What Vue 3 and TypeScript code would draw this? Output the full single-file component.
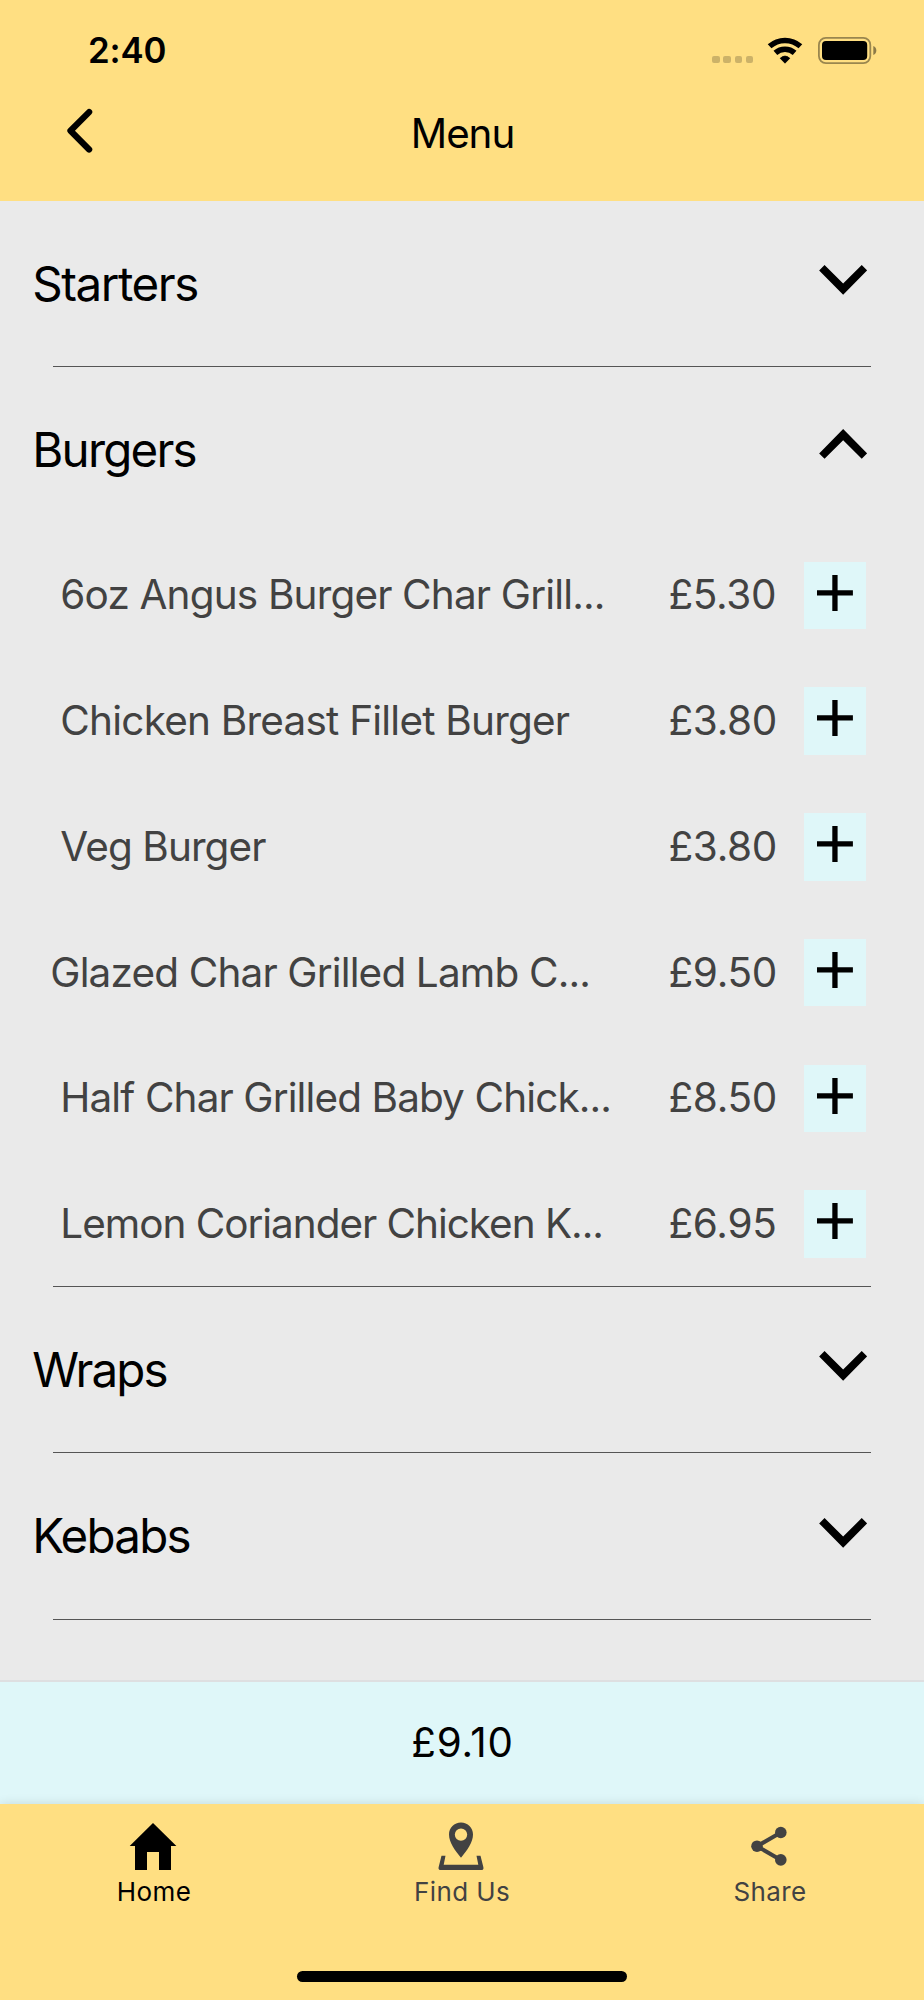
<script setup lang="ts">
import { computed, ref } from 'vue'

interface Item {
  name: string
  price: number
  tracking: number
  outdent?: boolean
}

interface Section {
  title: string
  tracking: number
  open: boolean
  items: Item[]
}

const sections = ref<Section[]>([
  { title: 'Starters', tracking: -1.46, open: false, items: [] },
  {
    title: 'Burgers',
    tracking: -1.78,
    open: true,
    items: [
      { name: '6oz Angus Burger Char Grill...', price: 5.3, tracking: -0.84 },
      { name: 'Chicken Breast Fillet Burger', price: 3.8, tracking: -0.78 },
      { name: 'Veg Burger', price: 3.8, tracking: -0.92 },
      { name: 'Glazed Char Grilled Lamb C...', price: 9.5, tracking: -0.85, outdent: true },
      { name: 'Half Char Grilled Baby Chick...', price: 8.5, tracking: -0.89 },
      { name: 'Lemon Coriander Chicken K...', price: 6.95, tracking: -1.04 },
    ],
  },
  { title: 'Wraps', tracking: -1.9, open: false, items: [] },
  { title: 'Kebabs', tracking: -1.75, open: false, items: [] },
])

const total = ref(9.1)
const activeTab = ref('Home')
const tabs = ['Home', 'Find Us', 'Share']

const money = (value: number): string => `£${value.toFixed(2)}`
const totalLabel = computed(() => money(total.value))

function toggle(section: Section): void {
  section.open = !section.open
}

function add(item: Item): void {
  total.value += item.price
}
</script>

<template>
  <div class="screen">
    <header class="app-bar">
      <div class="status">
        <span class="time">2:40</span>
        <div class="indicators">
          <span class="cell"><i v-for="n in 4" :key="n"></i></span>
          <svg class="wifi" viewBox="0 0 36 27" aria-hidden="true">
            <g fill="none" stroke="#000" stroke-width="5.5">
              <path d="M2.6 9.3a23 23 0 0 1 30.8 0" />
              <path d="M8.4 15.9a14.2 14.2 0 0 1 19.2 0" />
            </g>
            <path
              d="M18 26.2 L13.2 21.3 Q18 16.9 22.8 21.3 Z"
              stroke="#000"
              stroke-width=".8"
              stroke-linejoin="round"
            />
          </svg>
          <svg class="battery" viewBox="0 0 59 27" aria-hidden="true">
            <rect x=".9" y=".9" width="51.4" height="25.2" rx="7" fill="none" stroke="#000" stroke-opacity=".4" stroke-width="1.8" />
            <rect x="4" y="4" width="45.2" height="19" rx="4" />
            <path d="M55.3 9v9q3-1.3 3-4.5t-3-4.5z" fill-opacity=".45" />
          </svg>
        </div>
      </div>
      <div class="toolbar">
        <button class="back" type="button" aria-label="Back">
          <svg viewBox="0 0 26 46">
            <path d="M22.1 4.1 3.5 22.8 22.1 41.4" fill="none" stroke="#000" stroke-width="6.3" stroke-linecap="round" stroke-linejoin="round" />
          </svg>
        </button>
        <h1>Menu</h1>
      </div>
    </header>

    <main class="menu">
      <section v-for="section in sections" :key="section.title" class="section">
        <button class="section-head" :class="{ open: section.open }" type="button" @click="toggle(section)">
          <span class="section-title" :style="{ letterSpacing: section.tracking + 'px' }">{{ section.title }}</span>
          <svg class="chevron" viewBox="0 0 48 30" aria-hidden="true">
            <path v-if="section.open" d="M24 0 48 24.4 42.6 29.8 24 11.2 5.4 29.8 0 24.4z" />
            <path v-else d="M24 29.8 48 5.4 42.6 0 24 18.6 5.4 0 0 5.4z" />
          </svg>
        </button>
        <ul v-if="section.open" class="items">
          <li v-for="item in section.items" :key="item.name" class="item">
            <span class="name" :class="{ outdent: item.outdent }" :style="{ letterSpacing: item.tracking + 'px' }">{{ item.name }}</span>
            <span class="price">{{ money(item.price) }}</span>
            <button class="add" type="button" aria-label="Add" @click="add(item)">
              <svg viewBox="0 0 36 36">
                <path d="M15.3 0h5.3v15.3h15.3v5.3h-15.3v15.3h-5.3v-15.3h-15.3v-5.3h15.3z" />
              </svg>
            </button>
          </li>
        </ul>
        <hr class="rule" />
      </section>
    </main>

    <div class="basket">{{ totalLabel }}</div>

    <nav class="tab-bar">
      <div class="tabs">
        <button v-for="tab in tabs" :key="tab" class="tab" :class="{ active: tab === activeTab }" type="button" @click="activeTab = tab">
          <svg class="tab-icon" viewBox="0 0 48 48" fill="currentColor" aria-hidden="true">
            <path v-if="tab === 'Home'" d="M24 1 47.4 24H42v24H30V30H18v18H6V24H.7z" />
            <g v-else-if="tab === 'Find Us'">
              <path
                fill-rule="evenodd"
                d="M24 .6c6.7 0 12 5.3 12 12 0 8-6.2 16.5-12 23.2-5.8-6.7-12-15.2-12-23.2 0-6.7 5.3-12 12-12zm0 5.8a6.2 6.2 0 1 0 0 12.4 6.2 6.2 0 1 0 0-12.4z"
              />
              <path d="M4.5 33.7h4L6.7 42.8h34.6l-1.8-9.1h4l2.9 11.5q.6 2.8-2.2 2.8H3.8Q1 48 1.600 45.200z" />
            </g>
            <g v-else>
              <path d="M35.8 10.5 12 24.2l23.8 13.7" fill="none" stroke="currentColor" stroke-width="4" />
              <circle cx="35.8" cy="10.5" r="5.8" />
              <circle cx="12" cy="24.2" r="5.8" />
              <circle cx="35.8" cy="37.9" r="5.8" />
            </g>
          </svg>
          <span class="tab-label">{{ tab }}</span>
        </button>
      </div>
      <div class="home-indicator"></div>
    </nav>
  </div>
</template>

<style>
body {
  margin: 0;
}
</style>

<style scoped>
.screen {
  display: flex;
  flex-direction: column;
  width: 924px;
  height: 2000px;
  overflow: hidden;
  background: #eaeaea;
  color: #000;
  font-family: Inter, "Liberation Sans", sans-serif;
}

button {
  padding: 0;
  border: 0;
  background: none;
  color: inherit;
  font: inherit;
}

svg {
  display: block;
}

.app-bar {
  flex: none;
  height: 201px;
  background: #ffdf82;
}

.status {
  display: flex;
  align-items: center;
  justify-content: space-between;
  height: 100px;
  padding: 0 47px 0 88px;
}

.time {
  font-size: 34.8px;
  font-weight: 600;
  letter-spacing: -0.15px;
}

.indicators {
  display: flex;
  align-items: center;
}

.cell {
  display: flex;
  gap: 3.7px;
  margin: 19px 14px 0 0;
}

.cell i {
  width: 7.4px;
  height: 7.4px;
  border-radius: 2px;
  background: rgba(0, 0, 0, 0.2);
}

.wifi {
  width: 36px;
  height: 27px;
  margin-right: 14.5px;
}

.battery {
  width: 59px;
  height: 27px;
  margin-right: 0.5px;
}

.toolbar {
  display: grid;
  grid-template-columns: 1fr auto 1fr;
  align-items: center;
  height: 66px;
}

.back {
  justify-self: start;
  margin: 0 0 5px 67px;
}

.back svg {
  width: 26px;
  height: 46px;
}

.toolbar h1 {
  margin: 2px 0 0 1px;
  font-size: 40.3px;
  font-weight: 400;
  line-height: 48px;
  letter-spacing: -1.05px;
}

.menu {
  flex: none;
  height: 1479px;
}

.section-head {
  display: flex;
  align-items: center;
  justify-content: space-between;
  width: 100%;
  height: 165.25px;
  padding: 0 56.7px 0 32.3px;
}

.section-title {
  font-size: 47.5px;
  line-height: 58px;
}

.chevron {
  width: 48.3px;
  height: 30px;
  margin-bottom: 7px;
}

.open .chevron {
  margin-bottom: 11.5px;
}

.items {
  height: 753.7px;
  margin: 0;
  padding: 0;
  list-style: none;
}

.item {
  display: flex;
  align-items: center;
  height: 125.75px;
  padding: 0 58px 0 60.3px;
  color: #424242;
  font-size: 40.5px;
  line-height: 50px;
}

.name {
  flex: 1;
  white-space: nowrap;
}

.name.outdent {
  margin-left: -10px;
  margin-right: 10px;
}

.price {
  width: 135.6px;
  letter-spacing: -0.3px;
}

.add {
  display: flex;
  align-items: center;
  justify-content: center;
  width: 62px;
  height: 67.7px;
  background: #dff7f9;
  color: #000;
}

.add svg {
  width: 36px;
  height: 36px;
  margin-right: 0.6px;
  margin-bottom: 5.5px;
}

.rule {
  height: 1px;
  margin: 0 53px;
  border: 0;
  background: #555;
}

.basket {
  box-sizing: border-box;
  display: flex;
  flex: none;
  align-items: center;
  justify-content: center;
  height: 123.5px;
  padding-left: 1px;
  border-top: 2px solid #dedfe1;
  background: #dff7f9;
  font-size: 40.3px;
  letter-spacing: 0.8px;
}

.tab-bar {
  display: flex;
  flex: 1;
  flex-direction: column;
  align-items: center;
  background: #ffdf82;
  box-shadow: 0 0 10px rgba(0, 0, 0, 0.12);
}

.tabs {
  display: grid;
  grid-template-columns: repeat(3, 1fr);
  width: 100%;
  padding-top: 18.5px;
}

.tab {
  display: flex;
  flex-direction: column;
  align-items: center;
  color: #424242;
}

.tab.active {
  color: #000;
}

.tab-icon {
  width: 48px;
  height: 48px;
  margin-right: 2px;
}

.tab-label {
  margin-top: 6px;
  font-size: 26px;
  line-height: 32px;
  letter-spacing: 0.4px;
}

.home-indicator {
  width: 330px;
  height: 11px;
  margin: auto 0 18px;
  border-radius: 5.5px;
  background: #000;
}
</style>
